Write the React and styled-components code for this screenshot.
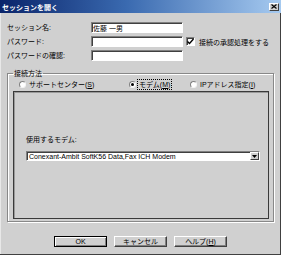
import React from 'react';
import styled, { createGlobalStyle } from 'styled-components';

const GlobalStyle = createGlobalStyle`
  body {
    margin: 0;
    background: #d0d0d0;
  }
`;

const Window = styled.div`
  width: 281px;
  height: 255px;
  box-sizing: border-box;
  display: flex;
  flex-direction: column;
  background: #d0d0d0;
  box-shadow: inset -1px -1px 0 #404040, inset 1px 0 0 #e8e8e8;
  font-family: "Liberation Sans", "Noto Sans CJK JP", sans-serif;
  font-size: 7px;
  color: #000;
`;

const TitleBar = styled.div`
  height: 13px;
  display: flex;
  align-items: center;
  justify-content: space-between;
  padding: 0 2px 0 2px;
  background: linear-gradient(90deg, #0a246a 0%, #3a6ab0 45%, #a6caf0 100%);
  color: #fff;
  font-weight: bold;
  font-size: 7px;
`;

const CloseButton = styled.div`
  width: 10px;
  height: 8px;
  box-sizing: border-box;
  display: flex;
  align-items: center;
  justify-content: center;
  background: #d0d0d0;
  border: 1px solid;
  border-color: #fff #404040 #404040 #fff;
`;

const Body = styled.div`
  flex: 1;
  display: flex;
  flex-direction: column;
  padding: 9px 7px 0 7px;
`;

const FormGrid = styled.div`
  display: grid;
  grid-template-columns: 84px 92px auto;
  grid-auto-rows: 11px;
  row-gap: 3px;
  align-items: center;
`;

const Label = styled.div`
  line-height: 11px;
  white-space: nowrap;
`;

const TextBox = styled.input`
  width: 100%;
  height: 11px;
  box-sizing: border-box;
  margin: 0;
  padding: 0 1px;
  background: #fff;
  border: 1px solid;
  border-color: #808080 #fff #fff #808080;
  box-shadow: inset 1px 1px 0 #404040;
  font: inherit;
  outline: none;
`;

const CheckLine = styled.label`
  display: flex;
  align-items: center;
  gap: 4px;
  margin-left: 3px;
  white-space: nowrap;
`;

const CheckBox = styled.span`
  width: 9px;
  height: 9px;
  box-sizing: border-box;
  display: flex;
  align-items: center;
  justify-content: center;
  background: #fff;
  border: 1px solid;
  border-color: #808080 #fff #fff #808080;
  box-shadow: inset 1px 1px 0 #404040;
`;

const Group = styled.fieldset`
  margin: 7px 0 0 0;
  padding: 0 4px 2px 5px;
  border: 1px solid #888;
  box-shadow: 1px 1px 0 #fff, inset 1px 1px 0 #fff;
  min-width: 0;
`;

const Legend = styled.legend`
  padding: 0 1px;
  line-height: 11px;
`;

const RadioRow = styled.div`
  display: grid;
  grid-template-columns: 110px 61px auto;
  height: 10px;
  align-items: center;
  padding-left: 6px;
`;

const RadioItem = styled.div`
  display: flex;
  align-items: center;
  gap: 2px;
  white-space: nowrap;
`;

const RadioDot = styled.span`
  width: 7px;
  height: 7px;
  box-sizing: border-box;
  border-radius: 50%;
  background: #fff;
  border: 1px solid;
  border-color: #808080 #f4f4f4 #f4f4f4 #808080;
  display: flex;
  align-items: center;
  justify-content: center;
  &::after {
    content: '';
    width: 3px;
    height: 3px;
    border-radius: 50%;
    background: ${p => (p.$checked ? '#000' : 'transparent')};
  }
`;

const RadioText = styled.span`
  line-height: 9px;
  padding: 0 1px;
  outline: ${p => (p.$focus ? '1px dotted #000' : 'none')};
`;

const Key = styled.span`
  text-decoration: underline;
`;

const Panel = styled.div`
  margin-top: 2px;
  height: 128px;
  box-sizing: border-box;
  border: 1px solid #3a3a3a;
  box-shadow: inset 1px 1px 0 #9a9a9a;
  padding: 43px 8px 0 12px;
  display: flex;
  flex-direction: column;
  gap: 6px;
`;

const PanelLabel = styled.div`
  line-height: 10px;
`;

const Select = styled.div`
  height: 10px;
  box-sizing: border-box;
  display: flex;
  align-items: center;
  justify-content: space-between;
  background: #fff;
  border: 1px solid;
  border-color: #808080 #fff #fff #808080;
  box-shadow: inset 1px 1px 0 #404040;
  padding-left: 2px;
  white-space: nowrap;
`;

const DropButton = styled.span`
  width: 9px;
  height: 8px;
  box-sizing: border-box;
  display: flex;
  align-items: center;
  justify-content: center;
  background: #d0d0d0;
  border: 1px solid;
  border-color: #fff #404040 #404040 #fff;
`;

const ButtonRow = styled.div`
  margin-top: 14px;
  display: flex;
  justify-content: center;
  gap: 7px;
`;

const Button = styled.div`
  width: 53px;
  height: 11px;
  box-sizing: border-box;
  display: flex;
  align-items: center;
  justify-content: center;
  background: #d0d0d0;
  border: 1px solid;
  border-color: ${p => (p.$default ? '#000' : '#fff #404040 #404040 #fff')};
  box-shadow: ${p => (p.$default
    ? 'inset 1px 1px 0 #fff, inset -1px -1px 0 #808080'
    : 'inset -1px -1px 0 #808080')};
  line-height: 9px;
`;

const Check = () => (
  <svg width="7" height="7" viewBox="0 0 7 7">
    <path d="M0.5 3.5 L2.5 5.5 L6.5 1" stroke="#000" strokeWidth="1.4" fill="none" />
  </svg>
);

const Cross = () => (
  <svg width="6" height="5" viewBox="0 0 6 5">
    <path d="M0.5 0.5 L5.5 4.5 M5.5 0.5 L0.5 4.5" stroke="#000" strokeWidth="1.2" />
  </svg>
);

const Arrow = () => (
  <svg width="5" height="3" viewBox="0 0 5 3">
    <path d="M0 0 H5 L2.5 3 Z" fill="#000" />
  </svg>
);

export default function App() {
  return (
    <Window>
      <GlobalStyle />
      <TitleBar>
        <span>セッションを開く</span>
        <CloseButton><Cross /></CloseButton>
      </TitleBar>
      <Body>
        <FormGrid>
          <Label>セッション名:</Label>
          <TextBox readOnly defaultValue="佐藤 一男" />
          <span />
          <Label>パスワード:</Label>
          <TextBox readOnly type="password" />
          <CheckLine>
            <CheckBox><Check /></CheckBox>
            接続の承認処理をする
          </CheckLine>
          <Label>パスワードの確認:</Label>
          <TextBox readOnly type="password" />
          <span />
        </FormGrid>

        <Group>
          <Legend>接続方法</Legend>
          <RadioRow>
            <RadioItem>
              <RadioDot />
              <RadioText>サポートセンター(<Key>S</Key>)</RadioText>
            </RadioItem>
            <RadioItem>
              <RadioDot $checked />
              <RadioText $focus>モデム(<Key>M</Key>)</RadioText>
            </RadioItem>
            <RadioItem>
              <RadioDot />
              <RadioText>IPアドレス指定(<Key>I</Key>)</RadioText>
            </RadioItem>
          </RadioRow>
          <Panel>
            <PanelLabel>使用するモデム:</PanelLabel>
            <Select>
              <span>Conexant-Ambit SoftK56 Data,Fax ICH Modem</span>
              <DropButton><Arrow /></DropButton>
            </Select>
          </Panel>
        </Group>

        <ButtonRow>
          <Button $default>OK</Button>
          <Button>キャンセル</Button>
          <Button>ヘルプ(<Key>H</Key>)</Button>
        </ButtonRow>
      </Body>
    </Window>
  );
}
